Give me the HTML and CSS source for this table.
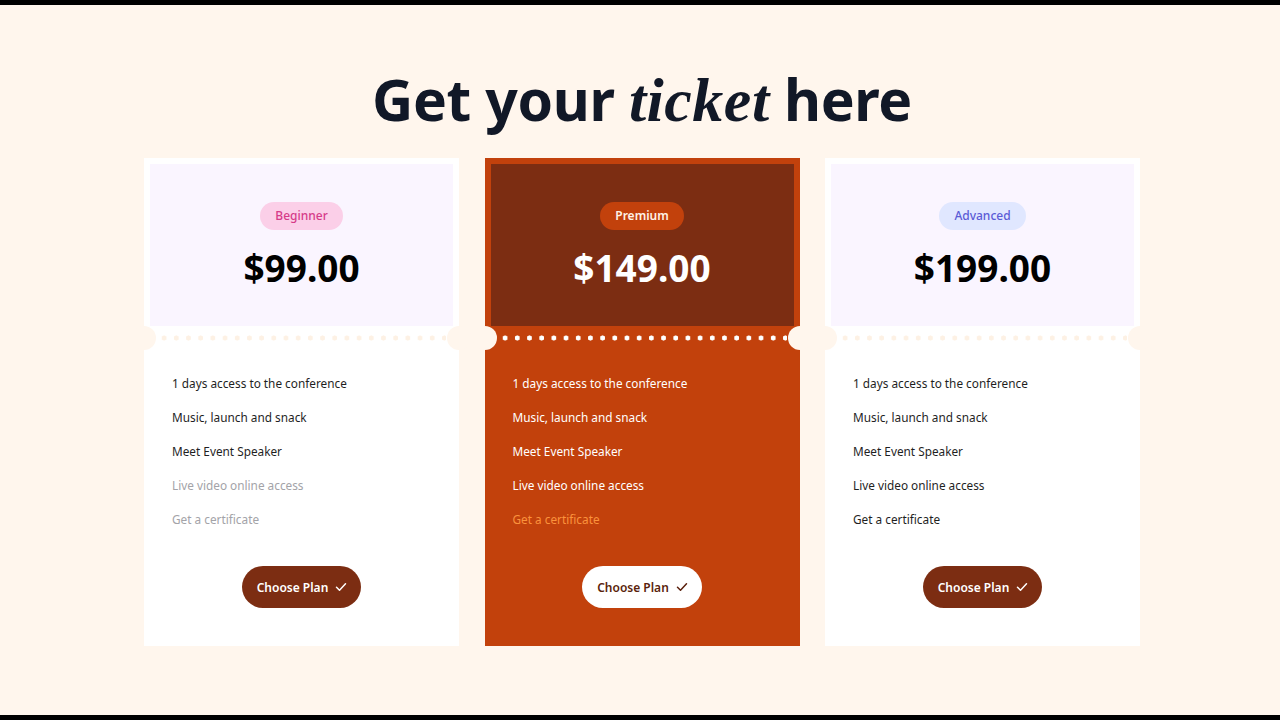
FILE: index.html
```html
<!DOCTYPE html>
<html lang="en">
<head>
<meta charset="utf-8">
<title>Get your ticket here</title>
<link rel="stylesheet" href="styles.css">
</head>
<body>
<div class="page">
  <h1 class="title">Get your <em>ticket</em> here</h1>
  <div class="cards">
    <div class="card">
      <div class="head">
        <span class="badge badge-pink">Beginner</span>
        <div class="price">$99.00</div>
      </div>
      <div class="perf"><div class="dots"></div></div>
      <ul class="features">
        <li>1 days access to the conference</li>
        <li>Music, launch and snack</li>
        <li>Meet Event Speaker</li>
        <li class="off">Live video online access</li>
        <li class="off">Get a certificate</li>
      </ul>
      <div class="action">
        <button class="btn">Choose Plan <svg width="12" height="12" viewBox="0 0 12 12"><path d="M1.5 6.3 L4.5 9.2 L10.5 2.8" fill="none" stroke="currentColor" stroke-width="1.5" stroke-linecap="round" stroke-linejoin="round"/></svg></button>
      </div>
    </div>
    <div class="card card-featured">
      <div class="head">
        <span class="badge badge-orange">Premium</span>
        <div class="price">$149.00</div>
      </div>
      <div class="perf"><div class="dots"></div></div>
      <ul class="features">
        <li>1 days access to the conference</li>
        <li>Music, launch and snack</li>
        <li>Meet Event Speaker</li>
        <li>Live video online access</li>
        <li class="off">Get a certificate</li>
      </ul>
      <div class="action">
        <button class="btn">Choose Plan <svg width="12" height="12" viewBox="0 0 12 12"><path d="M1.5 6.3 L4.5 9.2 L10.5 2.8" fill="none" stroke="currentColor" stroke-width="1.5" stroke-linecap="round" stroke-linejoin="round"/></svg></button>
      </div>
    </div>
    <div class="card">
      <div class="head">
        <span class="badge badge-indigo">Advanced</span>
        <div class="price">$199.00</div>
      </div>
      <div class="perf"><div class="dots"></div></div>
      <ul class="features">
        <li>1 days access to the conference</li>
        <li>Music, launch and snack</li>
        <li>Meet Event Speaker</li>
        <li>Live video online access</li>
        <li>Get a certificate</li>
      </ul>
      <div class="action">
        <button class="btn">Choose Plan <svg width="12" height="12" viewBox="0 0 12 12"><path d="M1.5 6.3 L4.5 9.2 L10.5 2.8" fill="none" stroke="currentColor" stroke-width="1.5" stroke-linecap="round" stroke-linejoin="round"/></svg></button>
      </div>
    </div>
  </div>
</div>
</body>
</html>
```

FILE: styles.css
```css
* { box-sizing: border-box; }
html, body { margin: 0; padding: 0; }
body {
  font-family: "Noto Sans", "Open Sans", "Liberation Sans", sans-serif;
  background: #fff6ed;
}
.page {
  height: 720px;
  border-top: 5px solid #000;
  border-bottom: 5px solid #000;
  padding-left: 4px;
  background: #fff6ed;
  display: flex;
  flex-direction: column;
  align-items: center;
}
.title {
  margin: 60px 0 0;
  font-size: 57px;
  line-height: 68px;
  font-weight: 700;
  color: #111827;
  letter-spacing: -0.4px;
}
.title em {
  font-family: "Liberation Serif", "DejaVu Serif", serif;
  font-style: italic;
  font-weight: 700;
  font-size: 62px;
  letter-spacing: 0.5px;
}
.cards {
  margin-top: 24px;
  display: flex;
  gap: 25.5px;
}
.card {
  width: 315px;
  height: 488px;
  background: #fff;
  display: flex;
  flex-direction: column;
}
.head {
  margin: 6px 6px 0;
  height: 162px;
  background: #faf5ff;
  display: flex;
  flex-direction: column;
  align-items: center;
  padding-top: 38px;
}
.badge {
  height: 28px;
  line-height: 28px;
  padding: 0 15px;
  border-radius: 14px;
  font-size: 12px;
  font-weight: 500;
}
.badge-pink { background: #fbcfe8; color: #d63b88; }
.badge-orange { background: #c2410c; color: #fff3e6; font-weight: 600; }
.badge-indigo { background: #e0e7ff; color: #5b5bd6; }
.price {
  margin-top: 16px;
  font-size: 37px;
  line-height: 44px;
  font-weight: 700;
  color: #000;
}
.perf {
  position: relative;
  height: 24px;
  display: flex;
  align-items: center;
}
.perf::before, .perf::after {
  content: "";
  position: absolute;
  top: 0;
  width: 24px;
  height: 24px;
  border-radius: 50%;
  background: #fff6ed;
}
.perf::before { left: -12px; }
.perf::after { right: -12px; }
.dots {
  flex: 1;
  margin: 0 13px 0 14px;
  height: 6px;
  background-image: radial-gradient(circle, #fdf1e4 2.3px, transparent 2.8px);
  background-size: 12.2px 6px;
  background-repeat: repeat-x;
}
.features {
  list-style: none;
  margin: 0;
  padding: 23px 28px 0;
  display: flex;
  flex-direction: column;
  gap: 14px;
}
.features li {
  font-size: 11.8px;
  line-height: 20px;
  color: #1f1f1f;
}
.features li.off { color: #a3a3a8; }
.action {
  margin-top: 37px;
  display: flex;
  justify-content: center;
}
.btn {
  height: 42px;
  padding: 0 14px 0 15px;
  border: none;
  border-radius: 21px;
  background: #7c2d12;
  color: #fff;
  font-family: inherit;
  font-size: 12px;
  font-weight: 600;
  display: flex;
  align-items: center;
  gap: 7px;
}
.card-featured { background: #c2410c; }
.card-featured .head { background: #7c2d12; }
.card-featured .price { color: #fff; }
.card-featured .dots {
  background-image: radial-gradient(circle, #fff 2.3px, transparent 2.8px);
}
.card-featured .features li { color: #fff; }
.card-featured .features li.off { color: #fb923c; }
.card-featured .btn { background: #fff; color: #5a1f0c; }
```
